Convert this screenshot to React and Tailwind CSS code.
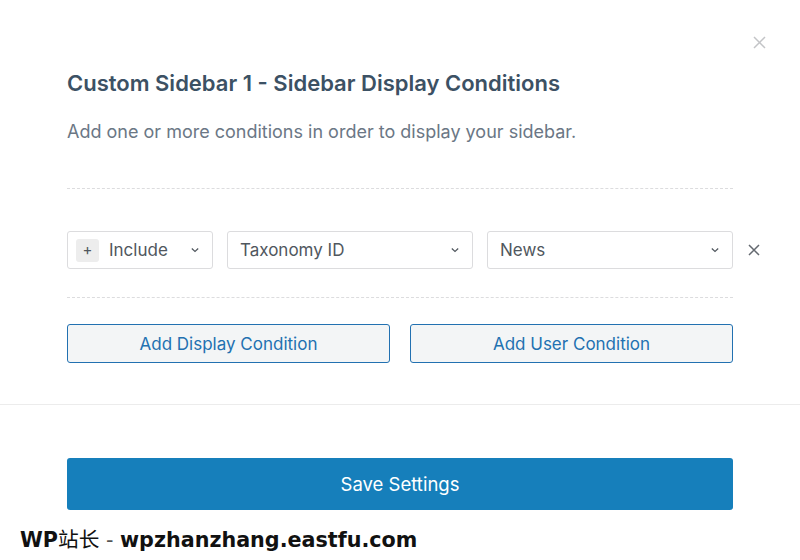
import React from 'react';

const Chevron = () => (
  <svg width="10" height="10" viewBox="0 0 10 10" className="shrink-0">
    <path d="M1.8 3.5 L5 6.5 L8.2 3.5" fill="none" stroke="#50575e" strokeWidth="1.2" />
  </svg>
);

const Select = ({ children, className }) => (
  <div className={`flex h-[38px] items-center justify-between rounded-[3px] border border-[#dcdcde] bg-white pr-[12px] ${className}`}>
    <div className="flex items-center gap-[10px] text-[17px] text-[#50575e]">{children}</div>
    <Chevron />
  </div>
);

const App = () => {
  return (
    <div className="relative h-[560px] w-[800px] overflow-hidden bg-white font-['Inter','Liberation_Sans',sans-serif]">
      {/* close */}
      <button className="absolute right-[34px] top-[36px] text-[#c3c4c7]">
        <svg width="13" height="13" viewBox="0 0 13 13">
          <path d="M1 1 L12 12 M12 1 L1 12" stroke="currentColor" strokeWidth="1.5" />
        </svg>
      </button>

      <div className="px-[67px] pt-[68px]">
        <h2 className="text-[22px] font-semibold leading-[30px] text-[#3c5164]">
          Custom Sidebar 1 - Sidebar Display Conditions
        </h2>
        <p className="mt-[21px] text-[18px] leading-[26px] text-[#6b7785]">
          Add one or more conditions in order to display your sidebar.
        </p>

        <div className="mt-[43px] border-t border-dashed border-[#dcdcde]" />

        <div className="relative mt-[42px] flex gap-[14px]">
          <Select className="w-[146px] pl-2">
            <span className="flex h-[23px] w-[23px] items-center justify-center rounded-[3px] bg-[#ededed] text-[15px] text-[#50575e]">+</span>
            <span className="pt-[2px]">Include</span>
          </Select>
          <Select className="w-[246px] pl-3">
            <span className="pt-[2px]">Taxonomy ID</span>
          </Select>
          <Select className="w-[246px] pl-3">
            <span className="pt-[2px]">News</span>
          </Select>
          <button className="absolute -right-[27px] top-[13px] text-[#646970]">
            <svg width="12" height="12" viewBox="0 0 12 12">
              <path d="M1 1 L11 11 M11 1 L1 11" stroke="currentColor" strokeWidth="1.5" />
            </svg>
          </button>
        </div>

        <div className="mt-[28px] border-t border-dashed border-[#dcdcde]" />

        <div className="mt-[26px] flex gap-[20px]">
          <button className="h-[39px] flex-1 rounded-[3px] border border-[#2271b1] bg-[#f3f5f6] pt-[2px] text-[17px] text-[#2271b1]">
            Add Display Condition
          </button>
          <button className="h-[39px] flex-1 rounded-[3px] border border-[#2271b1] bg-[#f3f5f6] pt-[2px] text-[17px] text-[#2271b1]">
            Add User Condition
          </button>
        </div>
      </div>

      <div className="mt-[41px] border-t border-[#ececec]" />

      <div className="px-[67px] pt-[53px]">
        <button className="h-[52px] w-full rounded-[3px] bg-[#167fbb] pt-[2px] text-[18.5px] text-white">
          Save Settings
        </button>
      </div>

      <div className="pl-[20px] pt-[14px] font-['DejaVu_Sans','Noto_Sans_CJK_SC',sans-serif] text-[20.7px] leading-[28px] text-[#111]">
        <span className="font-bold">WP</span>
        <span className="font-['Noto_Sans_CJK_SC',sans-serif] font-normal">站长</span>
        <span className="font-normal text-[#555]"> - </span>
        <span className="font-bold">wpzhanzhang.eastfu.com</span>
      </div>
    </div>
  );
};

export default App;
